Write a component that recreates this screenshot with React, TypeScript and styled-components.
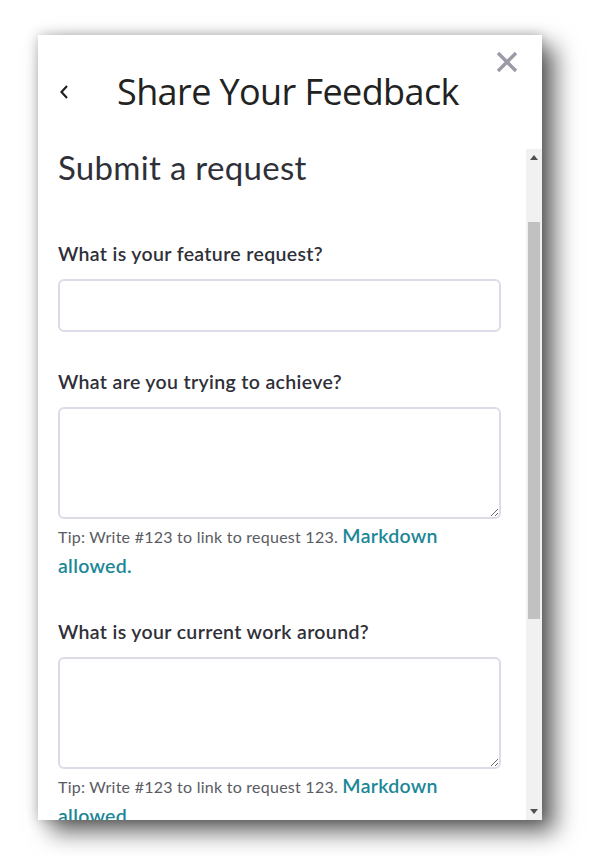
import React from "react";
import styled, { createGlobalStyle } from "styled-components";

const GlobalStyle = createGlobalStyle`
  html, body {
    margin: 0;
    padding: 0;
    background: #fff;
  }
  body {
    font-family: Lato, "Noto Sans", sans-serif;
    color: #2e2f36;
  }
`;

const Page = styled.div`
  width: 590px;
  height: 856px;
  padding: 35px 0 0 38px;
  box-sizing: border-box;
  overflow: hidden;
`;

const Panel = styled.div`
  width: 504px;
  height: 785px;
  background: #fff;
  display: flex;
  flex-direction: column;
  position: relative;
  box-shadow: 13px 12px 22px rgba(0, 0, 0, 0.6), 0 0 12px rgba(0, 0, 0, 0.25);
`;

const Header = styled.div`
  height: 114px;
  display: flex;
  align-items: center;
  padding: 0 0 0 20px;
  box-sizing: border-box;
`;

const BackButton = styled.button`
  border: 0;
  background: none;
  padding: 0;
  width: 59px;
  height: 30px;
  display: flex;
  align-items: center;
  cursor: pointer;
`;

const Title = styled.h1`
  margin: 0;
  font-family: "Open Sans", sans-serif;
  font-weight: 400;
  font-size: 36px;
  line-height: 44px;
  color: #222;
  letter-spacing: -0.6px;
`;

const CloseButton = styled.button`
  position: absolute;
  top: 16px;
  right: 24px;
  border: 0;
  background: none;
  padding: 0;
  width: 22px;
  height: 22px;
  cursor: pointer;
`;

const Body = styled.div`
  flex: 1;
  display: flex;
  min-height: 0;
`;

const Content = styled.div`
  flex: 1;
  overflow: hidden;
  padding: 0 25px 0 20px;
`;

const Heading = styled.h2`
  margin: 0 0 57px;
  font-weight: 400;
  font-size: 33px;
  line-height: 36px;
  letter-spacing: 0.3px;
  color: #2f3038;
`;

const Field = styled.div`
  margin-bottom: 38px;
`;

const Label = styled.label`
  display: block;
  font-weight: 600;
  font-size: 19.5px;
  line-height: 24px;
  letter-spacing: 0.35px;
  color: #2f3038;
  margin-bottom: 13px;
`;

const TextInput = styled.input`
  display: block;
  width: 100%;
  height: 53px;
  box-sizing: border-box;
  border: 2px solid #dcdce8;
  border-radius: 6px;
  outline: none;
  font: inherit;
  padding: 0 12px;
`;

const TextArea = styled.textarea`
  display: block;
  width: 100%;
  height: 112px;
  box-sizing: border-box;
  border: 2px solid #dcdce8;
  border-radius: 6px;
  outline: none;
  font: inherit;
  padding: 10px 12px;
  margin: 0;
`;

const Tip = styled.p`
  margin: 3px 0 0;
  font-size: 16px;
  line-height: 30px;
  letter-spacing: 0.25px;
  color: #5a5b62;
`;

const TipLink = styled.a`
  font-size: 19.5px;
  line-height: 20px;
  font-weight: 600;
  letter-spacing: 0.3px;
  color: #1b8797;
  text-decoration: none;
`;

const ScrollTrack = styled.div`
  width: 16px;
  background: #f1f1f1;
  display: flex;
  flex-direction: column;
`;

const ScrollArrow = styled.div`
  height: 17px;
  display: flex;
  align-items: center;
  justify-content: center;
`;

const ScrollRail = styled.div`
  flex: 1;
  padding: 56px 2px 0;
`;

const ScrollThumb = styled.div<{ $height: number }>`
  height: ${(p) => p.$height}px;
  background: #c1c1c1;
`;

const ChevronLeft = () => (
  <svg width="12" height="20" viewBox="0 0 12 20">
    <polyline points="9,4 3.5,10 9,16" fill="none" stroke="#222" strokeWidth="2.2" />
  </svg>
);

const CloseIcon = () => (
  <svg width="22" height="22" viewBox="0 0 22 22">
    <path d="M2 2 L20 20 M20 2 L2 20" stroke="#9a9ba6" strokeWidth="3.4" strokeLinecap="butt" />
  </svg>
);

const Triangle = ({ up }: { up: boolean }) => (
  <svg width="8" height="5" viewBox="0 0 8 5">
    <polygon points={up ? "0,5 8,5 4,0" : "0,0 8,0 4,5"} fill="#505050" />
  </svg>
);

const tipText = "Tip: Write #123 to link to request 123. ";

export default function App() {
  return (
    <>
      <GlobalStyle />
      <Page>
        <Panel>
          <Header>
            <BackButton aria-label="Back">
              <ChevronLeft />
            </BackButton>
            <Title>Share Your Feedback</Title>
          </Header>
          <CloseButton aria-label="Close">
            <CloseIcon />
          </CloseButton>
          <Body>
            <Content>
              <Heading>Submit a request</Heading>
              <Field>
                <Label>What is your feature request?</Label>
                <TextInput type="text" />
              </Field>
              <Field>
                <Label>What are you trying to achieve?</Label>
                <TextArea />
                <Tip>
                  {tipText}
                  <TipLink href="#">Markdown allowed.</TipLink>
                </Tip>
              </Field>
              <Field>
                <Label>What is your current work around?</Label>
                <TextArea />
                <Tip>
                  {tipText}
                  <TipLink href="#">Markdown allowed.</TipLink>
                </Tip>
              </Field>
            </Content>
            <ScrollTrack>
              <ScrollArrow>
                <Triangle up />
              </ScrollArrow>
              <ScrollRail>
                <ScrollThumb $height={397} />
              </ScrollRail>
              <ScrollArrow>
                <Triangle up={false} />
              </ScrollArrow>
            </ScrollTrack>
          </Body>
        </Panel>
      </Page>
    </>
  );
}
